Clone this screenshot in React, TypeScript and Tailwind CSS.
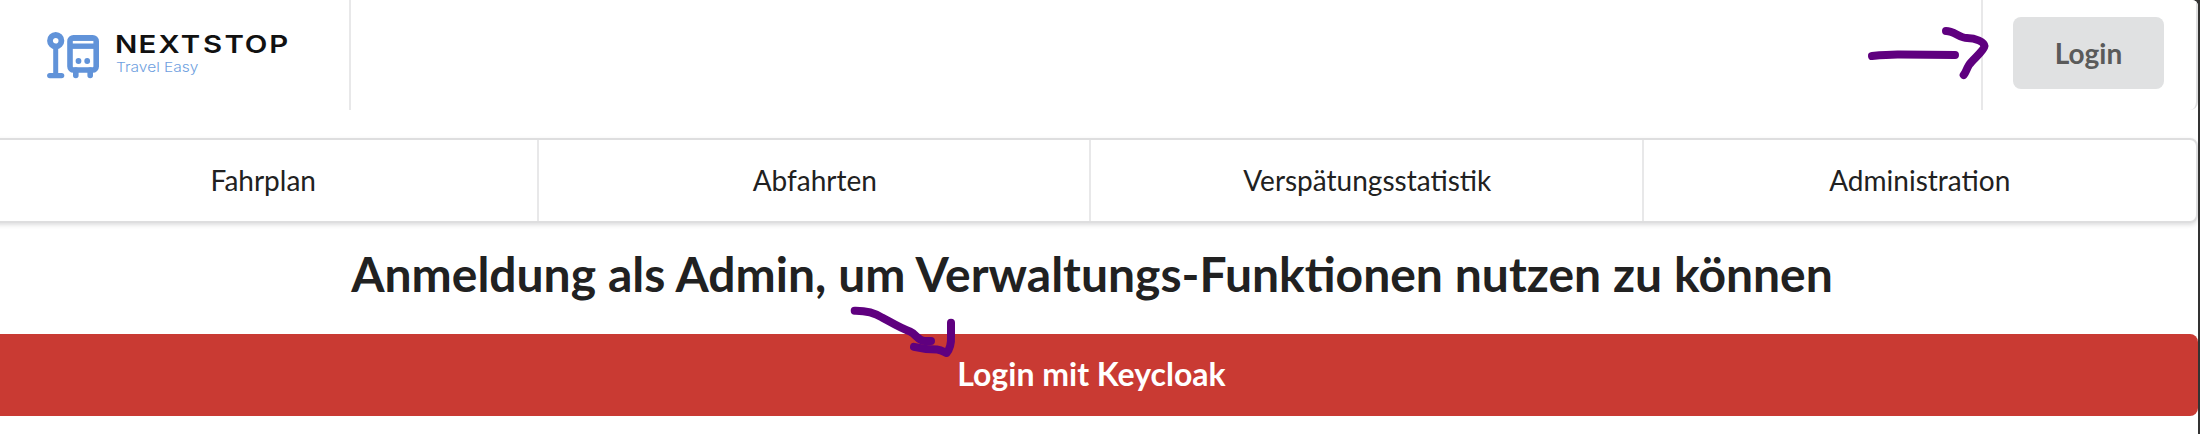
import React from "react";

const navItems = ["Fahrplan", "Abfahrten", "Verspätungsstatistik", "Administration"];

function Logo() {
  return (
    <svg width="280" height="60" viewBox="0 0 280 60" className="overflow-visible" aria-label="NextStop">
      <g fill="none" stroke="#6193d9">
        <circle cx="8.7" cy="8.7" r="5.7" strokeWidth="5.8" />
        <path d="M8.7 14V43" strokeWidth="5" />
        <path d="M2.8 43.6H14.6" strokeWidth="5.4" strokeLinecap="round" />
        <rect x="23" y="5.8" width="26.2" height="32.2" rx="3.5" strokeWidth="5.6" />
        <path d="M22 14.2H50" strokeWidth="5.4" />
        <path d="M28.8 38V43.5M43.2 38V43.5" strokeWidth="5.6" strokeLinecap="round" />
      </g>
      <path d="M26 7.4H46.4" stroke="#6193d9" strokeWidth="3" />
      <circle cx="31.5" cy="29" r="2.9" fill="#6193d9" />
      <circle cx="40.2" cy="29" r="2.9" fill="#6193d9" />
      <text
        x="66 83.6 101.7 119.6 137.9 156 174.2 193.2"
        y="21"
        textAnchor="middle"
        transform="scale(1.2 1)"
        className="fill-[#111111] font-['Inter'] text-[24.5px] font-semibold"
      >
        NEXTSTOP
      </text>
      <text x="69" y="40" textLength="82.5" lengthAdjust="spacingAndGlyphs" className="fill-[#6f9fe0] font-['Inter'] text-[13.5px] font-light">
        Travel Easy
      </text>
    </svg>
  );
}

function Annotations() {
  return (
    <svg className="pointer-events-none absolute inset-0" width="2200" height="434" fill="none" stroke="#5f007f" strokeWidth="8" strokeLinecap="round" strokeLinejoin="round">
      <path d="M1872 56C1882 55 1890 54.3 1900 54.5L1955 55" />
      <path d="M1946 31C1954 31 1960 38 1967 38C1976 38 1984 42 1984.5 46C1984 51 1972 60 1969 65C1966 70 1966 72 1963.7 75" />
      <path d="M854.7 310.7C868 310.5 875 313 882 317.5C893 323.5 901 328.5 910 331.5C916 334 918 341 925 341H931" />
      <path d="M914 346.8C923 349 930 349.5 937 349.5C942 350 944 352 946.5 353C950 349 951.3 342 951 336V322.7" />
    </svg>
  );
}

export default function App() {
  return (
    <div className="relative h-[434px] w-[2200px] overflow-hidden bg-[#333333] font-['Lato',sans-serif] text-[28px] text-[#212121]">
      <div className="h-full w-[2198px] overflow-hidden rounded-tr-[6px] bg-white">
        <div className="-ml-[14px] flex w-[2212px] flex-col">
          <header className="flex h-[110px] rounded-br-[8px] border-r-2 border-[#dededf] bg-white">
            <div className="w-[365px] border-r-2 border-[#e8e8e9] pt-8 pl-[61px]">
              <Logo />
            </div>
            <div className="ml-auto flex w-[215px] items-start border-l-2 border-[#e8e8e9] pt-[17px] pl-[30px]">
              <button className="h-[72px] w-[151px] rounded-[8px] bg-[#e0e1e2] text-center font-bold text-[#5a5a5a]">Login</button>
            </div>
          </header>

          <nav className="mt-7 -ml-0.5 grid h-[85px] grid-cols-4 rounded-[8px] border-2 border-[#dededf] bg-white shadow-[0_2px_4px_rgba(34,36,38,0.15)]">
            {navItems.map((item) => (
              <a key={item} className="flex items-center justify-center border-r-2 border-[#e8e8e9] pb-0.5 pl-0.5 first:pl-1 last:border-r-0 last:pr-0.5">
                {item}
              </a>
            ))}
          </nav>

          <h1 className="mt-5 h-[62px] text-center text-[48px] leading-[62px] font-bold [word-spacing:0.2px]">
            Anmeldung als Admin, um Verwaltungs-Funktionen nutzen zu können
          </h1>

          <button className="mt-[29px] h-[82px] rounded-[8px] bg-[#c93a33] pr-px pb-0.5 text-[32px] font-bold text-white">Login mit Keycloak</button>
        </div>
      </div>
      <Annotations />
    </div>
  );
}
